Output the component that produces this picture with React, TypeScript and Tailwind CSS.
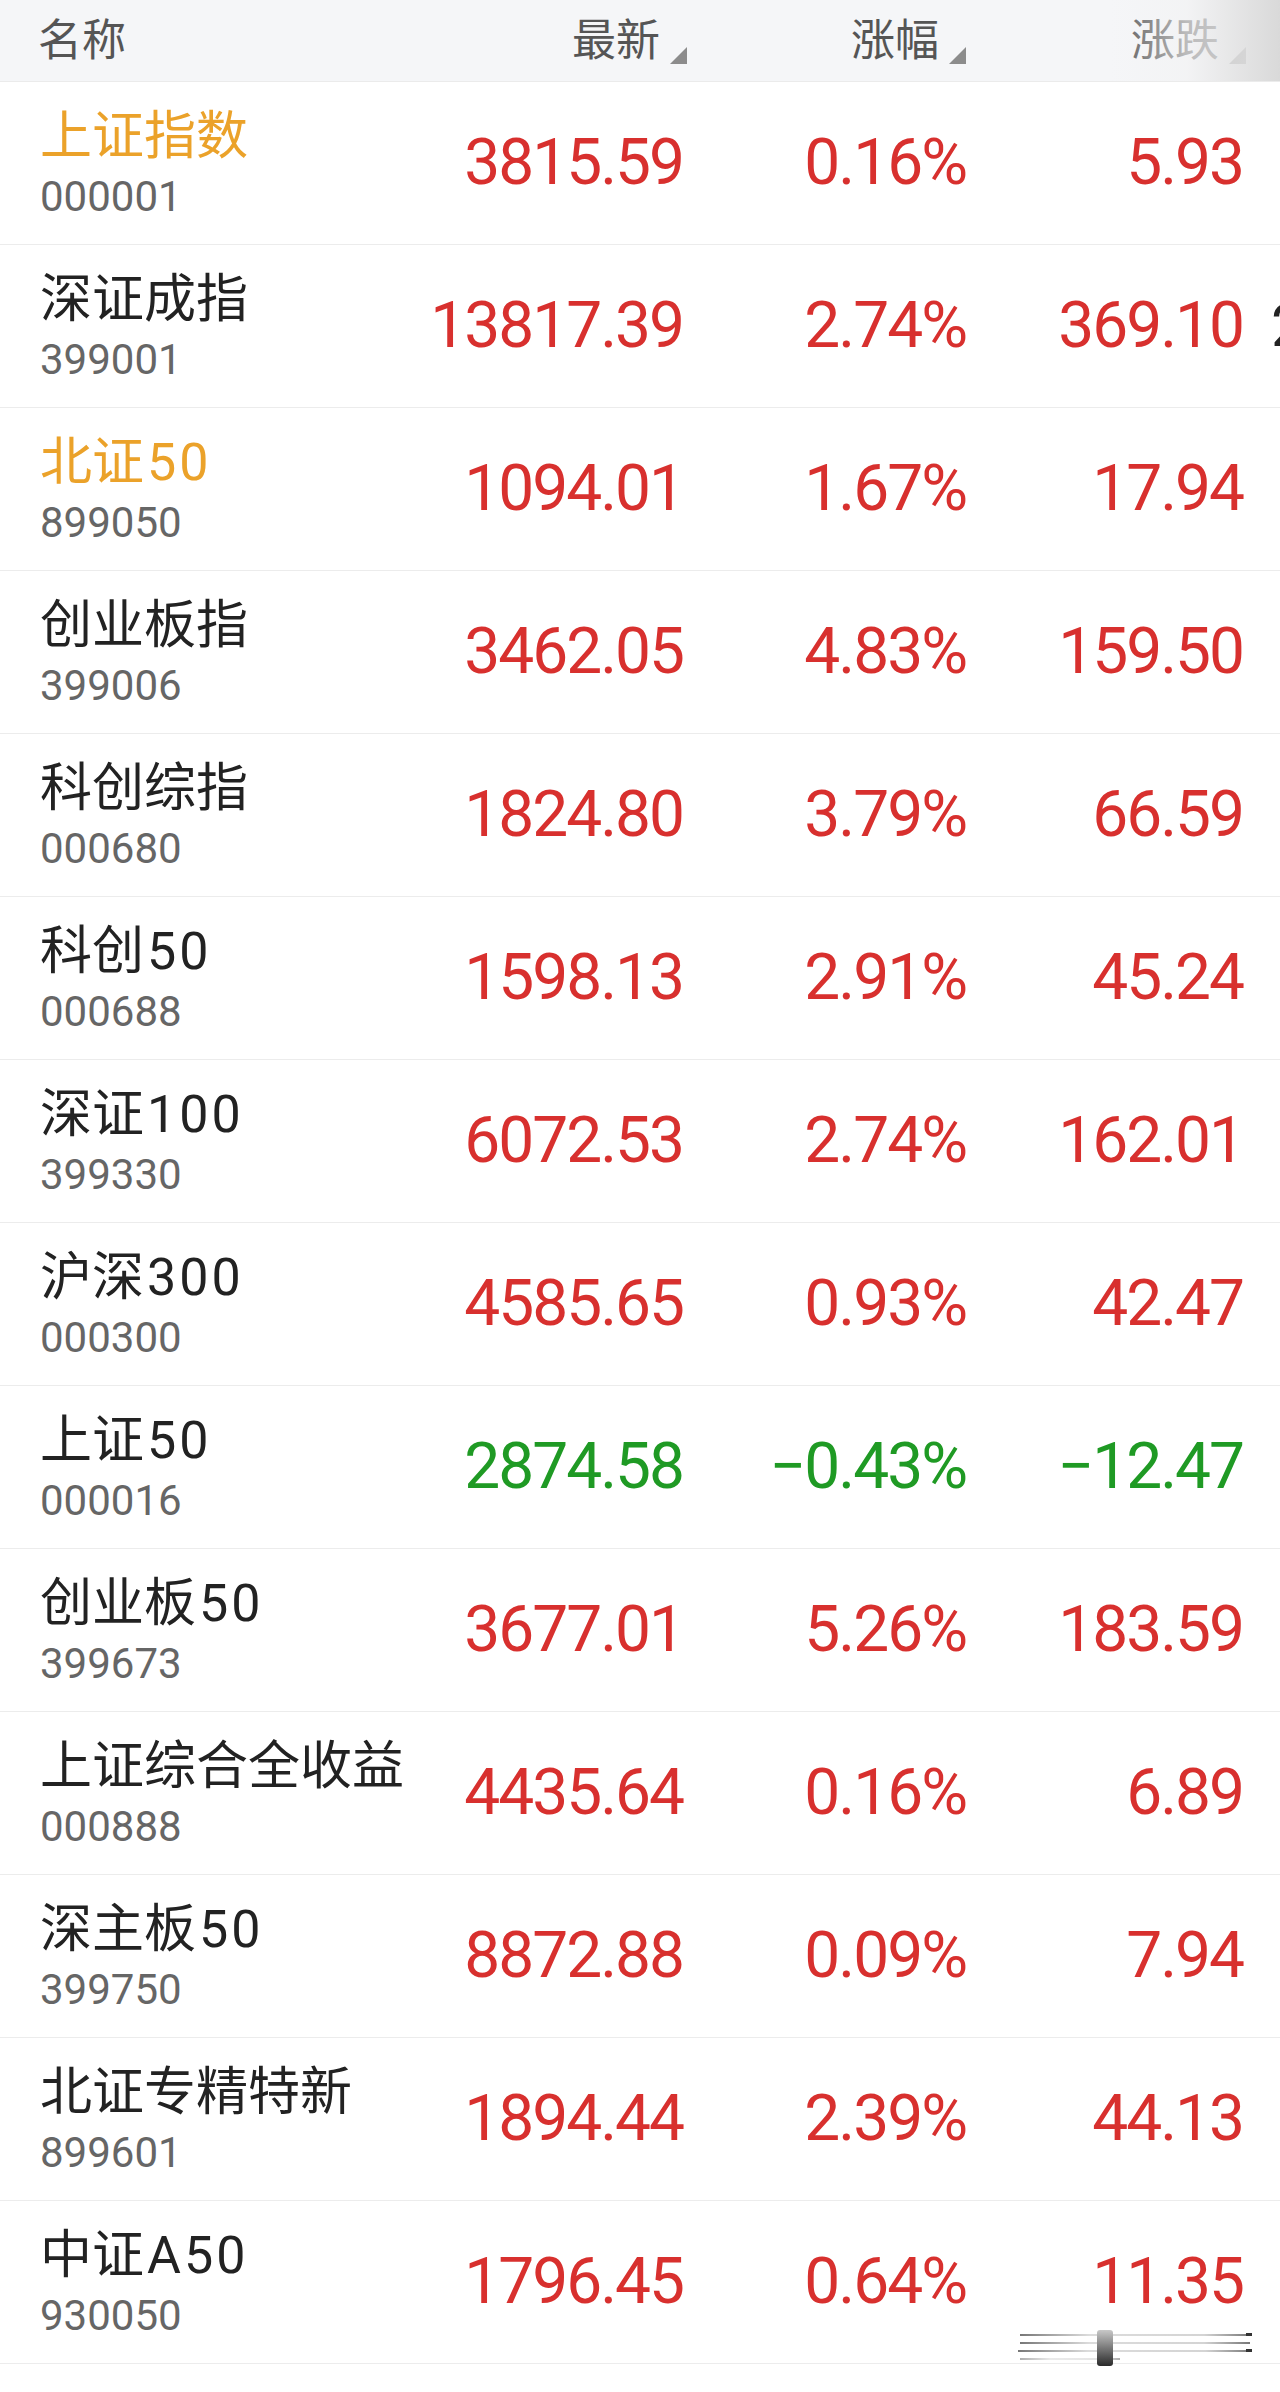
import React from "react";

type Row = {
  name: string;
  code: string;
  price: string;
  pct: string;
  chg: string;
  hl?: boolean;
  down?: boolean;
  extra?: string;
};

const rows: Row[] = [
  { name: "上证指数", code: "000001", price: "3815.59", pct: "0.16%", chg: "5.93", hl: true },
  { name: "深证成指", code: "399001", price: "13817.39", pct: "2.74%", chg: "369.10", extra: "2" },
  { name: "北证50", code: "899050", price: "1094.01", pct: "1.67%", chg: "17.94", hl: true },
  { name: "创业板指", code: "399006", price: "3462.05", pct: "4.83%", chg: "159.50" },
  { name: "科创综指", code: "000680", price: "1824.80", pct: "3.79%", chg: "66.59" },
  { name: "科创50", code: "000688", price: "1598.13", pct: "2.91%", chg: "45.24" },
  { name: "深证100", code: "399330", price: "6072.53", pct: "2.74%", chg: "162.01" },
  { name: "沪深300", code: "000300", price: "4585.65", pct: "0.93%", chg: "42.47" },
  { name: "上证50", code: "000016", price: "2874.58", pct: "−0.43%", chg: "−12.47", down: true },
  { name: "创业板50", code: "399673", price: "3677.01", pct: "5.26%", chg: "183.59" },
  { name: "上证综合全收益", code: "000888", price: "4435.64", pct: "0.16%", chg: "6.89" },
  { name: "深主板50", code: "399750", price: "8872.88", pct: "0.09%", chg: "7.94" },
  { name: "北证专精特新", code: "899601", price: "1894.44", pct: "2.39%", chg: "44.13" },
  { name: "中证A50", code: "930050", price: "1796.45", pct: "0.64%", chg: "11.35" },
];

function SortMark() {
  return (
    <svg width="17" height="17" viewBox="0 0 17 17" className="ml-[10px] mb-[2px] shrink-0">
      <polygon points="17,0 17,17 0,17" fill="#8c8c8c" />
    </svg>
  );
}

function HeaderCell({ label, w }: { label: string; w: string }) {
  return (
    <div className={`${w} shrink-0 flex items-end justify-end pb-[15px] h-full`}>
      <span className="text-[44px] leading-[50px] text-[#555555]">{label}</span>
      <SortMark />
    </div>
  );
}

function Name({ text }: { text: string }) {
  const parts = text.match(/[A-Za-z0-9]+|[^A-Za-z0-9]+/g) ?? [text];
  return (
    <>
      {parts.map((p, i) =>
        /^[A-Za-z0-9]+$/.test(p) ? (
          <span key={i} className="tracking-[3px] pl-[3px]">
            {p}
          </span>
        ) : (
          <span key={i}>{p}</span>
        )
      )}
    </>
  );
}

export default function App() {
  return (
    <div
      className="relative w-[1280px] h-[2392px] overflow-hidden bg-white"
      style={{ fontFamily: "Roboto, 'Noto Sans CJK SC', sans-serif" }}
    >
      {/* header */}
      <div className="relative flex h-[82px] bg-[#f5f6f8] border-b border-[#ebebeb]">
        <div className="w-[400px] shrink-0 pl-[38px] flex items-end pb-[15px]">
          <span className="text-[44px] leading-[50px] text-[#555555]">名称</span>
        </div>
        <HeaderCell label="最新" w="w-[287px]" />
        <HeaderCell label="涨幅" w="w-[279px]" />
        <HeaderCell label="涨跌" w="w-[280px]" />
        <div className="absolute right-0 top-0 h-full w-[170px] bg-[linear-gradient(to_right,rgba(245,246,248,0),rgba(242,242,243,0.65)_45%,#d9d9d9)]" />
      </div>

      {/* rows */}
      {rows.map((r) => {
        const color = r.down ? "text-[#1f9a24]" : "text-[#d8302e]";
        return (
          <div key={r.code} className="flex items-center h-[163px] border-b border-[#ececec]">
            <div className="w-[400px] shrink-0 pl-[40px] flex flex-col">
              <span
                className={`text-[52px] leading-[60px] whitespace-nowrap ${
                  r.hl ? "text-[#eba22a]" : "text-[#222222]"
                }`}
              >
                <Name text={r.name} />
              </span>
              <span className="text-[42px] leading-[46px] text-[#666666] mt-[7px]">{r.code}</span>
            </div>
            <div className={`w-[283px] shrink-0 text-right text-[64px] leading-[72px] tracking-[-2px] ${color}`}>
              {r.price}
            </div>
            <div className={`w-[283px] shrink-0 text-right text-[64px] leading-[72px] tracking-[-2px] ${color}`}>
              {r.pct}
            </div>
            <div className={`w-[277px] shrink-0 text-right text-[64px] leading-[72px] tracking-[-2px] ${color}`}>
              {r.chg}
            </div>
            <div className="pl-[28px] text-[60px] leading-[70px] text-[#222222] whitespace-nowrap">
              {r.extra ?? ""}
            </div>
          </div>
        );
      })}

      {/* scroll artifact */}
      <svg
        className="absolute left-[1018px] top-[2328px]"
        width="234"
        height="40"
        viewBox="0 0 234 40"
      >
        <defs>
          <linearGradient id="bar" x1="0" y1="0" x2="0" y2="1">
            <stop offset="0" stopColor="#c8c8c8" />
            <stop offset="1" stopColor="#2a2a2a" />
          </linearGradient>
          <linearGradient id="ln" x1="0" y1="0" x2="1" y2="0">
            <stop offset="0" stopColor="#777" />
            <stop offset="0.3" stopColor="#dcdcdc" />
            <stop offset="0.8" stopColor="#d4d4d4" />
            <stop offset="1" stopColor="#777" />
          </linearGradient>
        </defs>
        <rect x="2" y="6" width="230" height="2" fill="url(#ln)" />
        <rect x="2" y="14" width="230" height="2" fill="url(#ln)" />
        <rect x="0" y="22" width="234" height="2" fill="url(#ln)" />
        <rect x="2" y="30" width="100" height="2" fill="url(#ln)" opacity="0.6" />
        <rect x="79" y="2" width="16" height="36" rx="3" fill="url(#bar)" />
        <rect x="228" y="5" width="6" height="3" fill="#333" />
        <rect x="228" y="21" width="6" height="3" fill="#333" />
      </svg>
    </div>
  );
}
